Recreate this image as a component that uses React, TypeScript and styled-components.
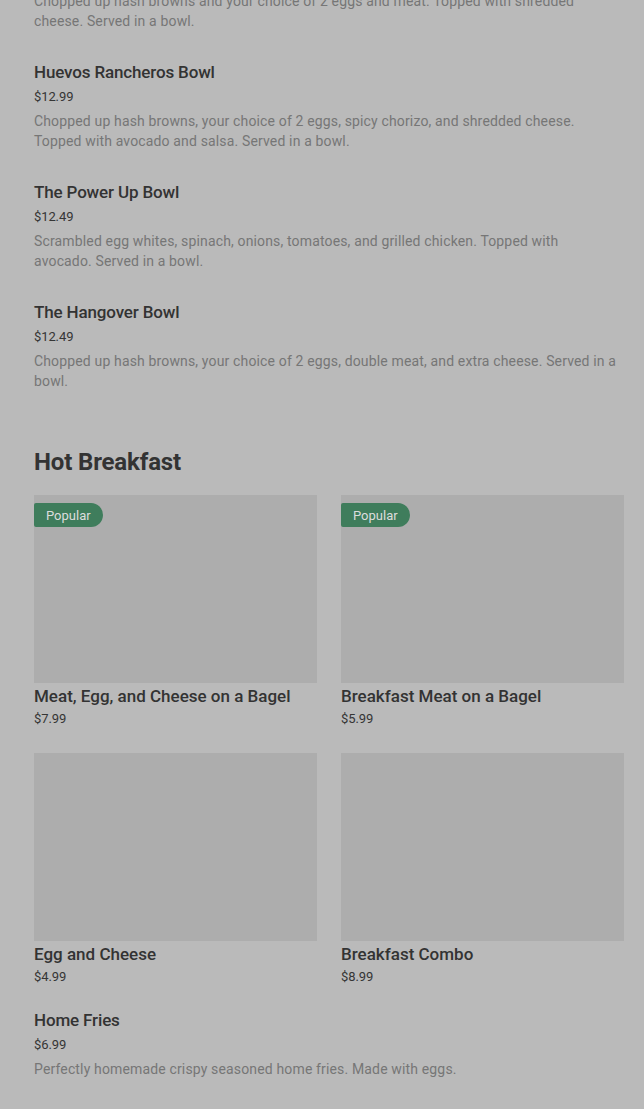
import React from "react";
import styled, { createGlobalStyle } from "styled-components";

const Global = createGlobalStyle`
  html, body { margin: 0; padding: 0; background: #bababa; }
  body { font-family: Roboto, "Liberation Sans", Arial, sans-serif; overflow: hidden; }
  * { box-sizing: border-box; }
`;

const Page = styled.main`
  padding: 0 20px 40px 34px;
  display: flex;
  flex-direction: column;
`;

const List = styled.section<{ $top?: number }>`
  display: flex;
  flex-direction: column;
  gap: 29px;
  margin-top: ${(p) => p.$top ?? 0}px;
`;

const Item = styled.article`
  display: flex;
  flex-direction: column;
`;

const Title = styled.h3`
  margin: 0;
  font-size: 17px;
  line-height: 24px;
  font-weight: 500;
  color: #333333;
  letter-spacing: -0.15px;
`;

const Price = styled.div<{ $tight?: boolean }>`
  margin-top: ${(p) => (p.$tight ? "1px" : "3px")};
  font-size: 13px;
  line-height: 20px;
  color: #353535;
  letter-spacing: -0.1px;
`;

const Desc = styled.p<{ $top?: number }>`
  margin: ${(p) => (p.$top !== undefined ? `${p.$top}px` : "4px")} 0 0;
  padding-right: 5px;
  font-size: 14px;
  line-height: 20px;
  color: #767676;
  letter-spacing: 0.15px;
`;

const SectionTitle = styled.h2`
  margin: 55px 0 17px;
  font-size: 24px;
  line-height: 32px;
  font-weight: 700;
  color: #333333;
  letter-spacing: -0.15px;
`;

const Grid = styled.section`
  display: grid;
  grid-template-columns: 1fr 1fr;
  column-gap: 24px;
  row-gap: 24px;
`;

const Card = styled.article`
  display: flex;
  flex-direction: column;
`;

const ImageBox = styled.div`
  position: relative;
  height: 188px;
  background: #adadad;
`;

const Badge = styled.span`
  position: absolute;
  top: 8px;
  left: 0;
  height: 24px;
  padding: 0 12px;
  display: flex;
  align-items: center;
  background: #3f7d5c;
  color: #dcdcdc;
  font-size: 13px;
  border-radius: 2px 12px 12px 2px;
`;

const CardTitle = styled(Title)`
  margin-top: 1px;
  letter-spacing: 0;
`;

const listItems = [
  {
    title: "Huevos Rancheros Bowl",
    price: "$12.99",
    desc: "Chopped up hash browns, your choice of 2 eggs, spicy chorizo, and shredded cheese. Topped with avocado and salsa. Served in a bowl.",
  },
  {
    title: "The Power Up Bowl",
    price: "$12.49",
    desc: "Scrambled egg whites, spinach, onions, tomatoes, and grilled chicken. Topped with avocado. Served in a bowl.",
  },
  {
    title: "The Hangover Bowl",
    price: "$12.49",
    desc: "Chopped up hash browns, your choice of 2 eggs, double meat, and extra cheese. Served in a bowl.",
  },
];

const cards = [
  { title: "Meat, Egg, and Cheese on a Bagel", price: "$7.99", popular: true },
  { title: "Breakfast Meat on a Bagel", price: "$5.99", popular: true },
  { title: "Egg and Cheese", price: "$4.99", popular: false },
  { title: "Breakfast Combo", price: "$8.99", popular: false },
];

export default function App() {
  return (
    <>
      <Global />
      <Page>
        <List>
          <Item>
            <Desc $top={-9}>
              Chopped up hash browns and your choice of 2 eggs and meat. Topped with shredded cheese. Served in a bowl.
            </Desc>
          </Item>
          {listItems.map((it) => (
            <Item key={it.title}>
              <Title>{it.title}</Title>
              <Price>{it.price}</Price>
              <Desc>{it.desc}</Desc>
            </Item>
          ))}
        </List>
        <SectionTitle>Hot Breakfast</SectionTitle>
        <Grid>
          {cards.map((c) => (
            <Card key={c.title}>
              <ImageBox>{c.popular && <Badge>Popular</Badge>}</ImageBox>
              <CardTitle>{c.title}</CardTitle>
              <Price $tight>{c.price}</Price>
            </Card>
          ))}
        </Grid>
        <List $top={21}>
          <Item>
            <Title>Home Fries</Title>
            <Price>$6.99</Price>
            <Desc>Perfectly homemade crispy seasoned home fries. Made with eggs.</Desc>
          </Item>
        </List>
      </Page>
    </>
  );
}
